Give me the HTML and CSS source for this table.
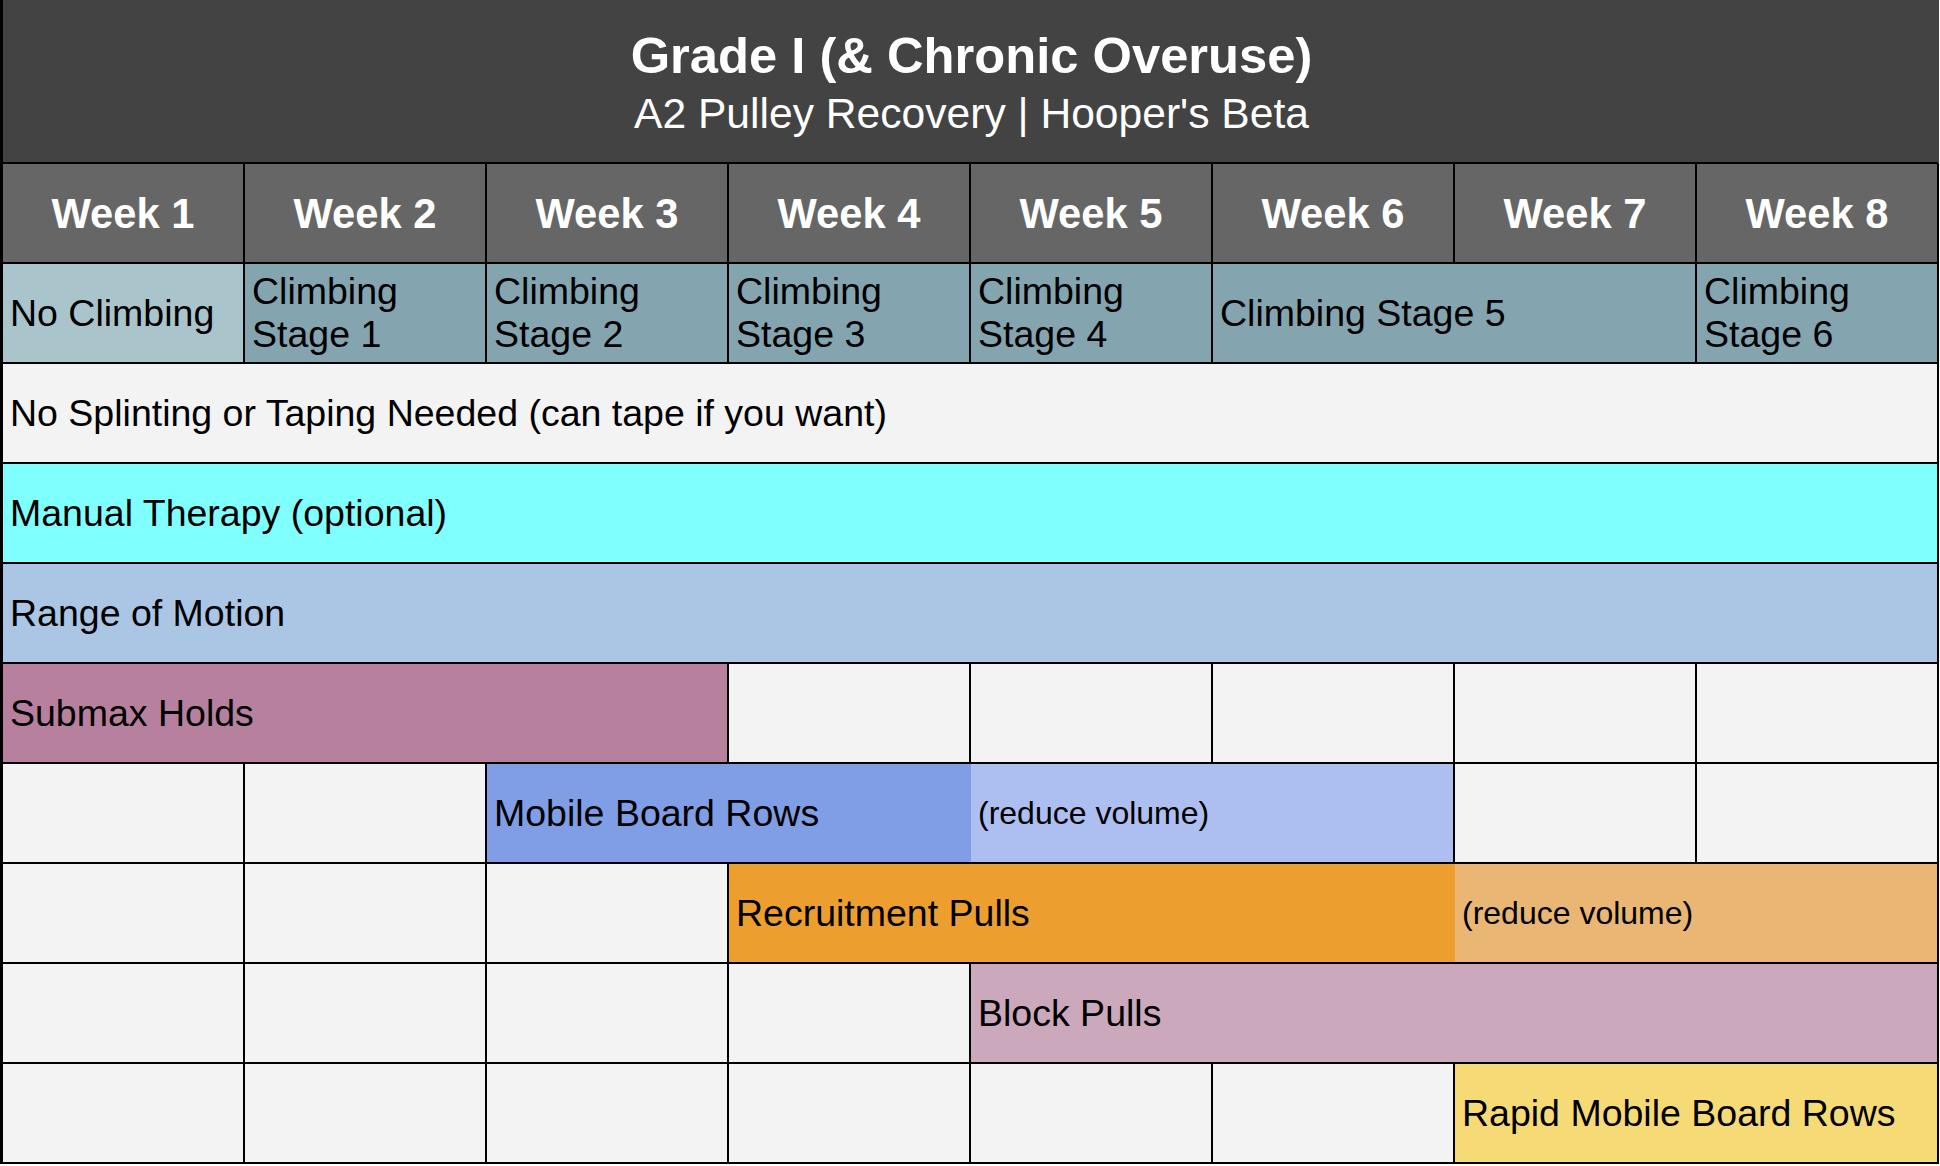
FILE: index.html
```html
<!DOCTYPE html>
<html lang="en">
<head>
<meta charset="utf-8">
<title>Grade I (&amp; Chronic Overuse) – A2 Pulley Recovery</title>
<link rel="stylesheet" href="styles.css">
</head>
<body>
<div class="sheet">
  <div class="cell title span8">
    <div class="title-main">Grade I (&amp; Chronic Overuse)</div>
    <div class="title-sub">A2 Pulley Recovery | Hooper's Beta</div>
  </div>

  <div class="cell week">Week 1</div>
  <div class="cell week">Week 2</div>
  <div class="cell week">Week 3</div>
  <div class="cell week">Week 4</div>
  <div class="cell week">Week 5</div>
  <div class="cell week">Week 6</div>
  <div class="cell week">Week 7</div>
  <div class="cell week">Week 8</div>

  <div class="cell noclimb">No Climbing</div>
  <div class="cell stage">Climbing Stage 1</div>
  <div class="cell stage">Climbing Stage 2</div>
  <div class="cell stage">Climbing Stage 3</div>
  <div class="cell stage">Climbing Stage 4</div>
  <div class="cell stage span2">Climbing Stage 5</div>
  <div class="cell stage">Climbing Stage 6</div>

  <div class="cell blank span8">No Splinting or Taping Needed (can tape if you want)</div>
  <div class="cell manual span8">Manual Therapy (optional)</div>
  <div class="cell rom span8">Range of Motion</div>

  <div class="cell submax span3">Submax Holds</div>
  <div class="cell blank"></div>
  <div class="cell blank"></div>
  <div class="cell blank"></div>
  <div class="cell blank"></div>
  <div class="cell blank"></div>

  <div class="cell blank"></div>
  <div class="cell blank"></div>
  <div class="cell mbr span2 join">Mobile Board Rows</div>
  <div class="cell mbr-light span2 small">(reduce volume)</div>
  <div class="cell blank"></div>
  <div class="cell blank"></div>

  <div class="cell blank"></div>
  <div class="cell blank"></div>
  <div class="cell blank"></div>
  <div class="cell recruit span3 join">Recruitment Pulls</div>
  <div class="cell recruit-light span2 small">(reduce volume)</div>

  <div class="cell blank"></div>
  <div class="cell blank"></div>
  <div class="cell blank"></div>
  <div class="cell blank"></div>
  <div class="cell block span4">Block Pulls</div>

  <div class="cell blank"></div>
  <div class="cell blank"></div>
  <div class="cell blank"></div>
  <div class="cell blank"></div>
  <div class="cell blank"></div>
  <div class="cell blank"></div>
  <div class="cell rapid span2">Rapid Mobile Board Rows</div>
</div>
</body>
</html>
```

FILE: styles.css
```css
html, body {
  margin: 0;
  padding: 0;
  background: #ffffff;
}

body {
  font-family: "Liberation Sans", Arial, sans-serif;
  color: #000000;
}

.sheet {
  display: grid;
  grid-template-columns: repeat(8, 242px);
  grid-template-rows: 164px;
  grid-auto-rows: 100px;
  width: 1936px;
  margin: 0;
  border-left: 3px solid #000000;
}

.cell {
  box-sizing: border-box;
  border-right: 2px solid #000000;
  border-bottom: 2px solid #000000;
  display: flex;
  align-items: center;
  padding: 0 4px 0 7px;
  font-size: 37.5px;
  line-height: 43px;
  overflow: hidden;
}

.join {
  border-right: none;
}

.span2 { grid-column: span 2; }
.span3 { grid-column: span 3; }
.span4 { grid-column: span 4; }
.span8 { grid-column: span 8; }

.title {
  background: #434343;
  color: #ffffff;
  flex-direction: column;
  justify-content: center;
  padding-top: 4px;
  border-right-color: #434343;
}

.title-main {
  font-size: 50.7px;
  font-weight: bold;
  line-height: 60px;
}

.title-sub {
  font-size: 42.6px;
  line-height: 54px;
}

.week {
  background: #666666;
  color: #ffffff;
  font-size: 41.7px;
  font-weight: bold;
  justify-content: center;
  padding: 0;
}

.noclimb { background: #a9c4ca; }
.stage { background: #84a4af; }
.blank { background: #f3f3f3; }
.manual { background: #80ffff; }
.rom { background: #abc5e5; }
.submax { background: #b7809e; }
.mbr { background: #7f9ee6; }
.mbr-light { background: #adbff1; }
.recruit { background: #ec9f2f; }
.recruit-light { background: #e9b674; }
.block { background: #cba8bc; }
.rapid { background: #f6da76; }

.small {
  font-size: 32px;
}
```
